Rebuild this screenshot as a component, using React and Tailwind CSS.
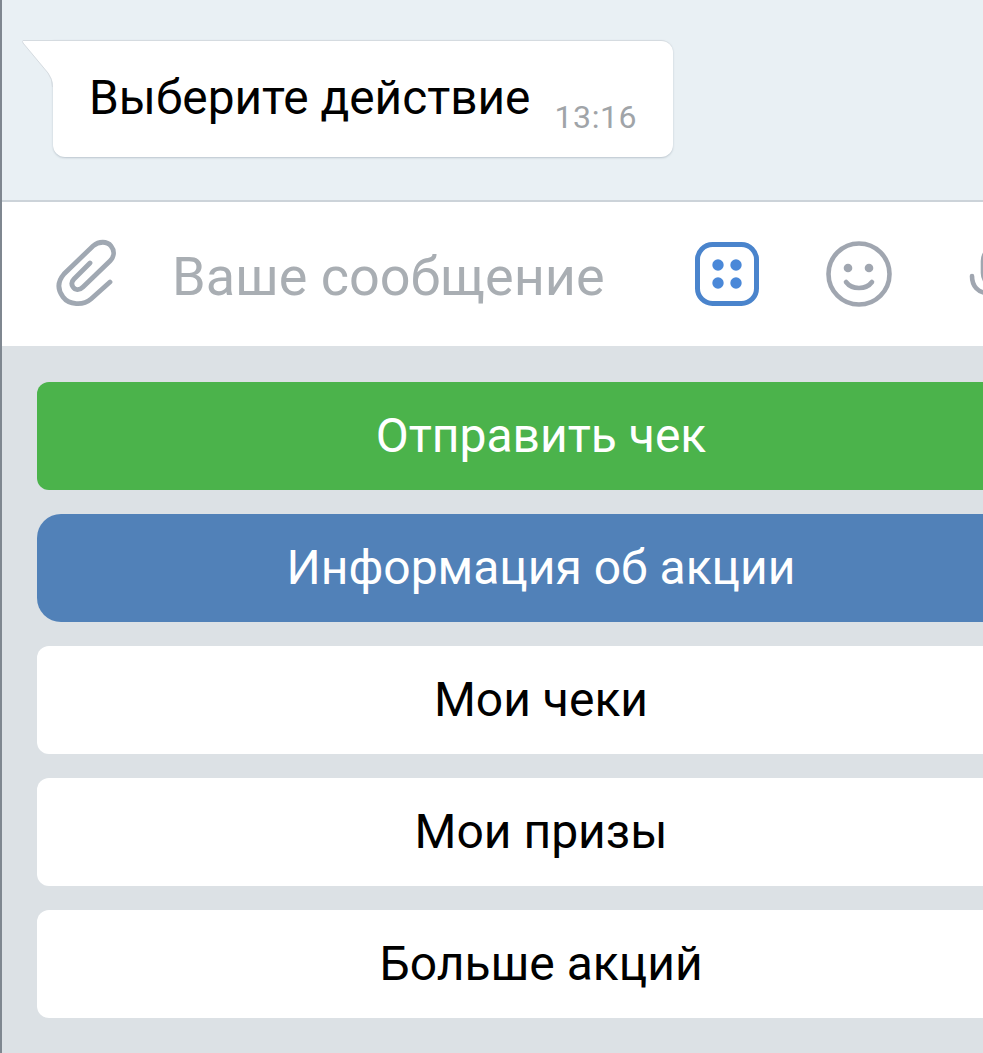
function Key({ children, className }) {
  return (
    <div className={`h-[108px] shrink-0 flex items-center justify-center text-[48px] leading-none ${className}`}>
      <span>{children}</span>
    </div>
  );
}

export default function App() {
  return (
    <div className="w-[983px] h-[1053px] overflow-hidden flex flex-col border-l-2 border-[#7f8790] font-['Roboto',sans-serif]">
      <div className="h-[202px] shrink-0 bg-[#e9f0f4] border-b-2 border-[#ccd3d9] pt-[40px] pl-[51px]">
        <div className="relative w-[620px] h-[117px] bg-white rounded-[12px] rounded-tl-none border-t border-[#d5dbe0] shadow-[0_1px_2px_rgba(120,135,150,0.4)] flex pl-[36px] pt-[29px]">
          <svg className="absolute left-[-31px] top-[-1px]" width="34" height="50" viewBox="0 0 34 50">
            <path d="M31 1 L1 1 Q0 1 1 3 L26 33 Q31 39 31 46 L34 50 L34 1 Z" fill="#fff" />
            <path d="M31 0.5 L1 0.5 Q0 1 1 3 L26 33 Q30.5 39 30.5 47" fill="none" stroke="#d5dbe0" strokeWidth="1" />
          </svg>
          <span className="text-[47.8px] leading-[56px] text-black">Выберите действие</span>
          <span className="ml-[24px] mt-[28px] text-[32px] leading-[38px] text-[#a0a4a8] tracking-[0.6px]">13:16</span>
        </div>
      </div>

      <div className="h-[144px] shrink-0 bg-white flex items-center pl-[53px] relative">
        <svg width="62" height="72" viewBox="0 0 62 72" fill="none" stroke="#a0a8b2" strokeWidth="4.8" strokeLinecap="round" className="shrink-0">
          <path d="M55 44 L36 61 C28 68 14 67 8 59 C2 51 3 43 9 36 L38 8 C44 3 52 3 56 8 C60 13 59 19 55 23 L28 49 C24 53 20 52 18 49 C16 46 17 43 19 41 L35 25" />
        </svg>
        <span className="ml-[55px] mt-[6px] text-[54px] leading-[60px] text-[#a9aeb3] w-[523px] shrink-0">Ваше сообщение</span>
        <svg width="64" height="64" viewBox="0 0 64 64" className="shrink-0">
          <rect x="2.5" y="2.5" width="59" height="59" rx="15" fill="none" stroke="#4a84cc" strokeWidth="5" />
          <circle cx="23" cy="23" r="5.7" fill="#4a88d8" />
          <circle cx="41" cy="23" r="5.7" fill="#4a88d8" />
          <circle cx="23" cy="41" r="5.7" fill="#4a88d8" />
          <circle cx="41" cy="41" r="5.7" fill="#4a88d8" />
        </svg>
        <svg width="66" height="66" viewBox="0 0 66 66" fill="none" className="shrink-0 ml-[67px]">
          <circle cx="33" cy="33" r="30.5" stroke="#a0a6b0" strokeWidth="4.6" />
          <circle cx="22" cy="27" r="4.3" fill="#a0a6b0" />
          <circle cx="43" cy="27" r="4.3" fill="#a0a6b0" />
          <path d="M20 41 C26 49 40 49 46 41" stroke="#a0a6b0" strokeWidth="4.6" strokeLinecap="round" />
        </svg>
        <svg width="30" height="60" viewBox="0 0 30 60" fill="none" className="absolute left-[966px] top-[44px]">
          <rect x="15" y="1" width="30" height="40" rx="14" stroke="#a0a6b0" strokeWidth="4.6" />
          <path d="M4 30 C4 40 10 47 20 47" stroke="#a0a6b0" strokeWidth="4.6" strokeLinecap="round" />
        </svg>
      </div>

      <div className="flex-1 min-h-0 bg-[#dce1e5] pt-[36px] pl-[35px]">
        <div className="w-[1008px] flex flex-col gap-[24px]">
          <Key className="bg-[#4bb34b] text-white rounded-[12px]">Отправить чек</Key>
          <Key className="bg-[#5181b8] text-white rounded-[24px]">Информация об акции</Key>
          <Key className="bg-white text-black rounded-[12px]">Мои чеки</Key>
          <Key className="bg-white text-black rounded-[12px]">Мои призы</Key>
          <Key className="bg-white text-black rounded-[12px]">Больше акций</Key>
        </div>
      </div>
    </div>
  );
}
